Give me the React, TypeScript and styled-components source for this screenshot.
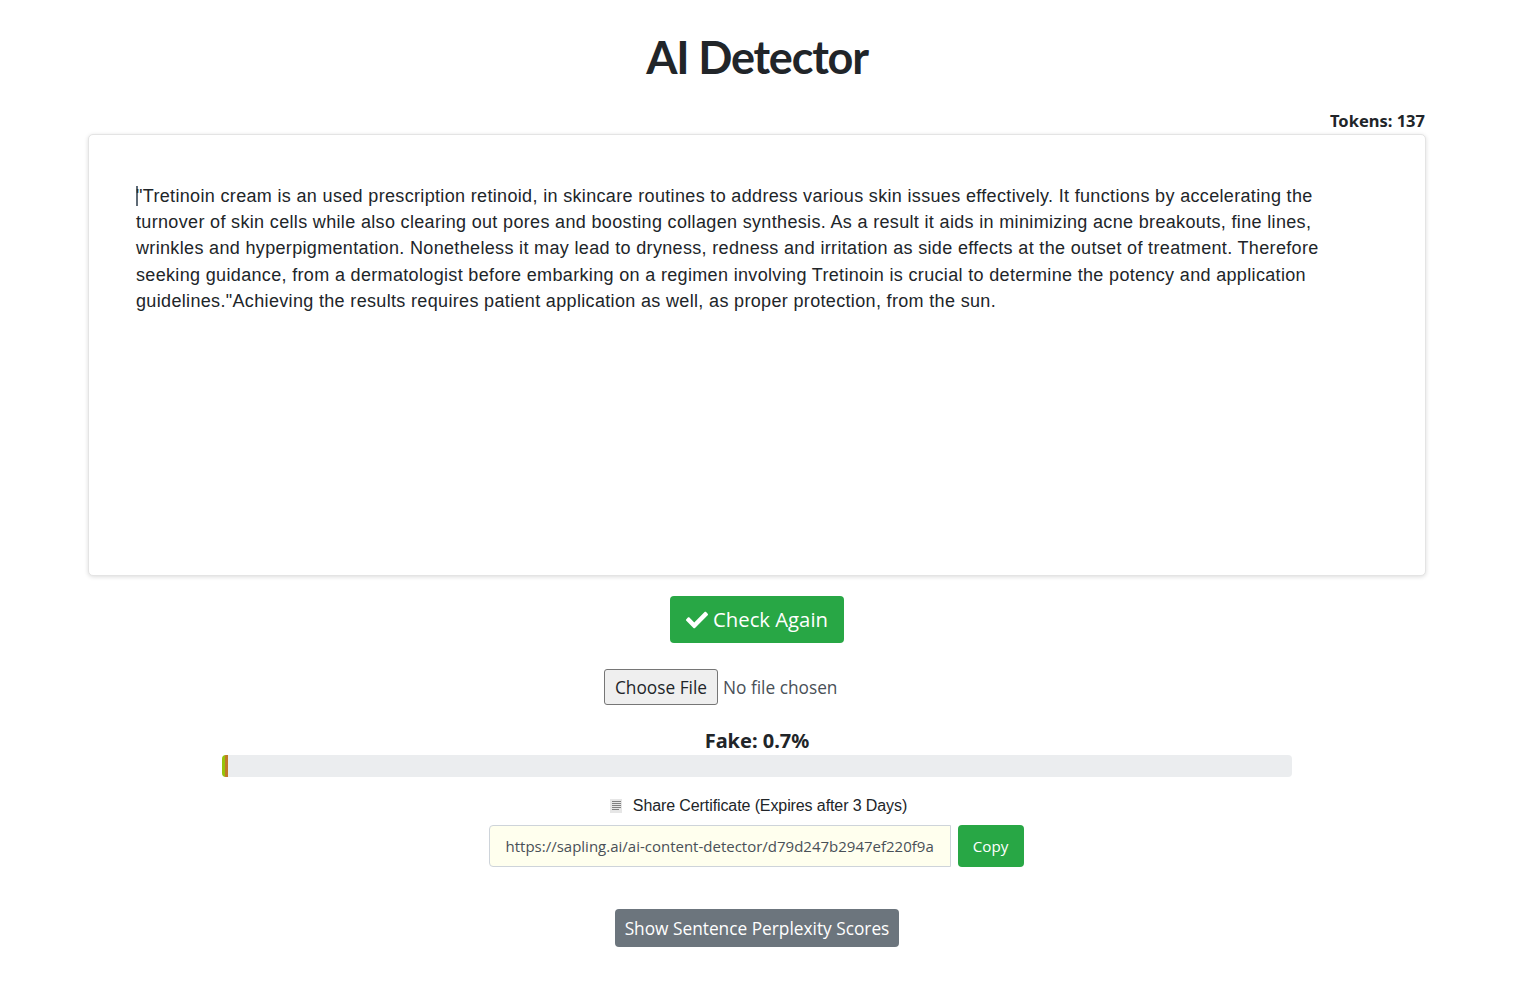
import { createGlobalStyle, styled } from "styled-components";
import { FaCheck } from "react-icons/fa";

const GlobalStyle = createGlobalStyle`
  html, body {
    margin: 0;
    padding: 0;
    background: #fff;
  }
  body {
    font-family: "Open Sans", "Noto Sans", sans-serif;
    color: #212529;
  }
`;

const Page = styled.main`
  width: 1514px;
  height: 1000px;
  padding: 0 88px;
  box-sizing: border-box;
  display: flex;
  flex-direction: column;
  align-items: center;
`;

const Title = styled.h1`
  margin: 28px 0 0;
  font-family: Lato, sans-serif;
  font-size: 45px;
  line-height: 58px;
  font-weight: 700;
  letter-spacing: -1.2px;
  color: #212529;
`;

const TokensRow = styled.div`
  align-self: stretch;
  margin-top: 23px;
  padding: 0 1px 1px 0;
  text-align: right;
  font-family: "Noto Sans", sans-serif;
  font-size: 16.5px;
  line-height: 24px;
  font-weight: 700;
`;

const EditorCard = styled.div`
  align-self: stretch;
  box-sizing: border-box;
  height: 442px;
  padding: 48px 47px;
  border: 1px solid #e4e4e4;
  border-radius: 5px;
  box-shadow: 0 1px 4px rgba(0, 0, 0, 0.14);
  background: #fff;
  font-family: "Liberation Sans", Arial, sans-serif;
  font-size: 18px;
  line-height: 26.2px;
  letter-spacing: 0.338px;
  color: #212529;
`;

const Caret = styled.span`
  display: inline-block;
  width: 2px;
  height: 20px;
  margin-right: -2px;
  vertical-align: -4px;
  background: #5f6b76;
`;

const PrimaryButton = styled.button`
  display: flex;
  align-items: center;
  gap: 5px;
  margin-top: 20px;
  height: 47px;
  padding: 0 16px 2px 16px;
  border: 0;
  border-radius: 4px;
  background: #28a745;
  color: #fff;
  font-family: "Open Sans", sans-serif;
  font-size: 20.3px;
  svg {
    width: 22px;
    height: 22px;
    margin-top: 2px;
  }
`;

const FileInput = styled.input`
  display: block;
  margin-top: 26px;
  width: 306px;
  height: 36px;
  font-family: "Open Sans", sans-serif;
  font-size: 17.3px;
  color: #495057;
  &::file-selector-button {
    height: 36px;
    width: 114px;
    padding: 0;
    margin-right: 5px;
    font: inherit;
    color: #212529;
    background: #efefef;
    border: 1px solid #767676;
    border-radius: 3px;
  }
`;

const ScoreLabel = styled.div`
  margin-top: 22px;
  font-family: "Noto Sans", sans-serif;
  font-size: 20px;
  line-height: 28px;
  font-weight: 700;
`;

const ProgressTrack = styled.div`
  display: flex;
  width: 1070px;
  height: 22px;
  border-radius: 4px;
  overflow: hidden;
  background: #ebedef;
`;

const ProgressSegment = styled.div<{ $color: string; $width: number }>`
  width: ${(p) => p.$width}px;
  background: ${(p) => p.$color};
`;

const ShareRow = styled.div`
  display: flex;
  align-items: center;
  gap: 10px;
  margin-top: 18px;
  margin-left: 2px;
  height: 22px;
  font-family: "Liberation Sans", Arial, sans-serif;
  font-size: 16px;
  letter-spacing: -0.1px;
`;

const LinkRow = styled.div`
  display: flex;
  gap: 7px;
  margin: 8px 2px 0 0;
`;

const LinkInput = styled.input`
  box-sizing: border-box;
  width: 462px;
  height: 42px;
  padding: 0 16px;
  border: 1px solid #ced4da;
  border-radius: 4px 0 0 4px;
  background: #ffffee;
  color: #495057;
  font-family: "Open Sans", sans-serif;
  font-size: 15px;
  outline: none;
`;

const CopyButton = styled.button`
  width: 66px;
  height: 42px;
  padding: 0;
  border: 0;
  border-radius: 4px;
  background: #28a745;
  color: #fff;
  font-family: "Open Sans", sans-serif;
  font-size: 15.2px;
`;

const SecondaryButton = styled.button`
  margin-top: 42px;
  width: 284px;
  height: 38px;
  padding: 0;
  border: 0;
  border-radius: 4px;
  background: #6c757d;
  color: #fff;
  font-family: "Open Sans", sans-serif;
  font-size: 17.3px;
`;

function CertificateIcon() {
  return (
    <svg width="14" height="16" viewBox="0 0 14 16">
      <path d="M1 1h12v14H1z" fill="#e6e6e6" />
      <path
        d="M3 3.5h9M3 5.5h9M3 7.5h9M3 9.5h9M3 11.5h7"
        stroke="#808080"
        strokeWidth="1"
        fill="none"
      />
    </svg>
  );
}

export default function App() {
  return (
    <>
      <GlobalStyle />
      <Page>
        <Title>AI Detector</Title>
        <TokensRow>Tokens: 137</TokensRow>
        <EditorCard>
          <Caret />
          "Tretinoin cream is an used prescription retinoid, in skincare routines to address various skin issues effectively. It functions by accelerating the
          <br />
          turnover of skin cells while also clearing out pores and boosting collagen synthesis. As a result it aids in minimizing acne breakouts, fine lines,
          <br />
          wrinkles and hyperpigmentation. Nonetheless it may lead to dryness, redness and irritation as side effects at the outset of treatment. Therefore
          <br />
          seeking guidance, from a dermatologist before embarking on a regimen involving Tretinoin is crucial to determine the potency and application
          <br />
          guidelines."Achieving the results requires patient application as well, as proper protection, from the sun.
        </EditorCard>
        <PrimaryButton>
          <FaCheck />
          Check Again
        </PrimaryButton>
        <FileInput type="file" />
        <ScoreLabel>Fake: 0.7%</ScoreLabel>
        <ProgressTrack>
          <ProgressSegment $color="#97c30a" $width={3} />
          <ProgressSegment $color="#c07a28" $width={3} />
        </ProgressTrack>
        <ShareRow>
          <CertificateIcon />
          Share Certificate (Expires after 3 Days)
        </ShareRow>
        <LinkRow>
          <LinkInput readOnly value="https://sapling.ai/ai-content-detector/d79d247b2947ef220f9a" />
          <CopyButton>Copy</CopyButton>
        </LinkRow>
        <SecondaryButton>Show Sentence Perplexity Scores</SecondaryButton>
      </Page>
    </>
  );
}
